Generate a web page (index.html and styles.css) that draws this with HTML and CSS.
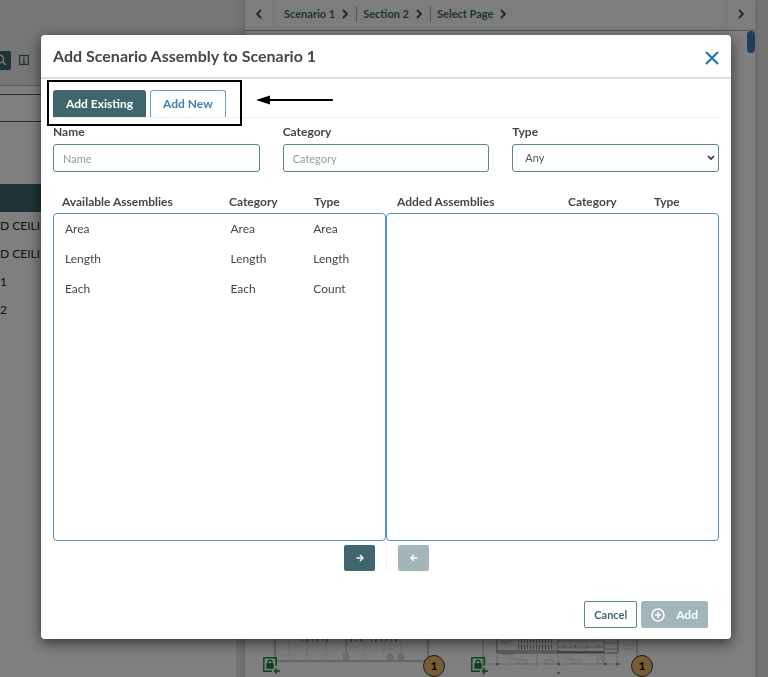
FILE: index.html
```html
<!DOCTYPE html>
<html lang="en">
<head>
  <meta charset="UTF-8" />
  <meta name="viewport" content="width=device-width, initial-scale=1.0" />
  <title>Add Scenario Assembly</title>
  <link rel="stylesheet" href="styles.css">
</head>
<body>
  <!-- Page behind the dialog -->
  <div class="page">
    <aside class="sidebar">
      <div class="sidebar-tools">
        <button class="search-btn" aria-label="Search">
          <svg width="12" height="12" viewBox="0 0 12 12" fill="none" stroke="#fff" stroke-width="1.3"><circle cx="5" cy="5" r="3.6"/><path d="M7.7 7.7L11 11"/></svg>
        </button>
        <svg width="10" height="10" viewBox="0 0 10 10" fill="none" stroke="#3f666d" stroke-width="1.2"><rect x=".6" y=".6" width="8.8" height="8.8"/><path d="M5 2v1.2M5 4.2V8M4 4.4h1M3.8 7.7h2.4"/></svg>
      </div>
      <input class="sidebar-filter" type="text" aria-label="Filter">
      <div class="sidebar-head"></div>
      <ul class="sidebar-list">
        <li>D CEILING</li>
        <li>D CEILING</li>
        <li>1</li>
        <li>2</li>
      </ul>
    </aside>

    <main class="viewer">
      <nav class="crumbs">
        <button class="crumb-nav" aria-label="Previous">
          <svg width="8" height="10" viewBox="0 0 8 10"><path d="M6 1L2 5l4 4"/></svg>
        </button>
        <a href="#">Scenario 1 <svg width="8" height="10" viewBox="0 0 8 10"><path d="M2 1l4 4-4 4"/></svg></a>
        <a href="#">Section 2 <svg width="8" height="10" viewBox="0 0 8 10"><path d="M2 1l4 4-4 4"/></svg></a>
        <a href="#">Select Page <svg width="8" height="10" viewBox="0 0 8 10"><path d="M2 1l4 4-4 4"/></svg></a>
        <button class="crumb-nav crumb-next" aria-label="Next">
          <svg width="8" height="10" viewBox="0 0 8 10"><path d="M2 1l4 4-4 4"/></svg>
        </button>
      </nav>
      <div class="sheets">
        <div class="scroll-thumb"></div>
        <div class="sheet">
          <svg class="plan" width="156" height="42" viewBox="0 0 156 42" fill="none" stroke="#999" stroke-width=".6">
            <path d="M1 0v26h153V0" stroke="#555" stroke-width="1"/>
            <path d="M28 5h30M72 5h20M97 5h30" stroke="#444" stroke-width="3" stroke-dasharray="1 3 2 4"/>
            <path d="M15 6v13M33 6v13M52 6v13M90 6v13M110 6v13M116 6v13M127 6v13" stroke="#bbb"/>
            <path d="M72 4v15" stroke="#666"/>
            <g stroke="#ccc"><circle cx="15" cy="22" r="2.5"/><circle cx="33" cy="22" r="2.5"/><circle cx="52" cy="22" r="2.5"/><circle cx="90" cy="22" r="2.5"/></g>
            <g stroke="#777" fill="#ccc"><circle cx="72" cy="22" r="3"/><circle cx="116" cy="22" r="3"/><circle cx="127" cy="22" r="3"/></g>
          </svg>
          <svg class="lock" width="17" height="17" viewBox="0 0 17 17" fill="none" stroke="#16853c" stroke-width="1.4"><path d="M9 14.2H.8V.8h12.4v8M5 7V5.2a2 2 0 0 1 4 0V7M17 14h-5M14 11.5L11.5 14l2.5 2.5"/><path d="M4 7h6v4H4z" fill="#16853c"/></svg>
          <span class="badge">1</span>
        </div>
        <div class="sheet">
          <svg class="plan" width="156" height="42" viewBox="0 0 156 42" fill="none" stroke="#999" stroke-width=".6">
            <path d="M1 0v42M155 0v26" stroke="#777" stroke-width="1"/>
            <path d="M15 0v18h121V0M15 16h61" stroke="#333" stroke-width="1"/>
            <path d="M36 5h36M36 12h36" stroke="#444" stroke-width="5" stroke-dasharray="1 2"/>
            <path d="M18 6h12M18 8h9M20 19h12" stroke="#333"/>
            <path d="M76 0v17h46V0M76 6h46M76 12h46M122 8h14M122 14h14" stroke="#333"/>
            <path d="M76 17h46" stroke="#222" stroke-width="1.5"/>
            <path d="M82 11h1M93 11h1M105 11h1M116 11h1" stroke="#111" stroke-width="1.5"/>
            <path d="M96 8h9v6h-9z" stroke="#d88"/>
            <path d="M4 4h10M4 8h9M142 4h9v6h-9zM143 14h8M4 18v11h135M25 22l4 2h8M81 22l4 2h7"/>
            <path d="M36 25h9v4h-9zM63 25h8v4h-8zM90 25h9v4h-9z"/>
            <path d="M15 20v12M55 20v12M76 20v12M122 20v12M135 20v12" stroke="#888"/>
            <path d="M14 29h3M75 29h3M122 29h3M134 29h3M75 38h3" stroke="#222" stroke-width="1.5"/>
            <circle cx="118" cy="26" r="3"/><path d="M115 21h6v6"/>
          </svg>
          <svg class="lock" width="17" height="17" viewBox="0 0 17 17" fill="none" stroke="#16853c" stroke-width="1.4"><path d="M9 14.2H.8V.8h12.4v8M5 7V5.2a2 2 0 0 1 4 0V7M17 14h-5M14 11.5L11.5 14l2.5 2.5"/><path d="M4 7h6v4H4z" fill="#16853c"/></svg>
          <span class="badge">1</span>
        </div>
      </div>
    </main>
    <div class="rail"></div>
  </div>

  <!-- Dialog -->
  <div class="overlay">
    <div class="modal" role="dialog" aria-labelledby="modalTitle">
      <div class="modal-header">
        <h1 id="modalTitle">Add Scenario Assembly to Scenario 1</h1>
        <button class="close-btn" aria-label="Close">
          <svg width="14" height="14" viewBox="0 0 14 14" fill="none" stroke="#3079a8" stroke-width="2.4"><path d="M1 1l12 12M13 1L1 13"/></svg>
        </button>
      </div>

      <div class="modal-body">
        <div class="tabs">
          <button class="tab active">Add Existing</button>
          <button class="tab">Add New</button>
          <div class="callout"></div>
          <svg class="callout-arrow" width="78" height="12" viewBox="0 0 78 12"><path d="M12 6h64" stroke="#000" stroke-width="2.2" stroke-linecap="round"/><path d="M0 6l14-4.5v9z"/></svg>
        </div>

        <div class="filters">
          <div class="field">
            <label for="name">Name</label>
            <input type="text" id="name" placeholder="Name">
          </div>
          <div class="field">
            <label for="category">Category</label>
            <input type="text" id="category" placeholder="Category">
          </div>
          <div class="field">
            <label for="type">Type</label>
            <div class="select-wrap">
              <select id="type">
                <option>Any</option>
              </select>
              <svg width="8" height="6" viewBox="0 0 8 6" fill="none" stroke="#333" stroke-width="1.7"><path d="M1 1l3 3 3-3"/></svg>
            </div>
          </div>
        </div>

        <div class="lists">
          <div class="list">
            <table class="available">
              <thead>
                <tr><th>Available Assemblies</th><th>Category</th><th>Type</th></tr>
              </thead>
              <tbody>
                <tr><td>Area</td><td>Area</td><td>Area</td></tr>
                <tr><td>Length</td><td>Length</td><td>Length</td></tr>
                <tr><td>Each</td><td>Each</td><td>Count</td></tr>
              </tbody>
            </table>
            <div class="move">
              <button class="move-btn" aria-label="Add to assemblies">
                <svg width="8" height="8" viewBox="0 0 8 8"><path d="M.5 4h6M4 1l3 3-3 3"/></svg>
              </button>
            </div>
          </div>
          <div class="list">
            <table class="added">
              <thead>
                <tr><th>Added Assemblies</th><th>Category</th><th>Type</th></tr>
              </thead>
              <tbody></tbody>
            </table>
            <div class="move">
              <button class="move-btn" aria-label="Remove from assemblies" disabled>
                <svg width="8" height="8" viewBox="0 0 8 8"><path d="M7.5 4h-6M4 1L1 4l3 3"/></svg>
              </button>
            </div>
          </div>
        </div>
      </div>

      <div class="modal-footer">
        <button class="btn">Cancel</button>
        <button class="btn btn-add" disabled>
          <svg width="14" height="14" viewBox="0 0 14 14" fill="none" stroke="#fff" stroke-width="1.5"><circle cx="7" cy="7" r="6"/><path d="M7 4v6M4 7h6"/></svg>
          Add
        </button>
      </div>
    </div>
  </div>
</body>
</html>
```
FILE: styles.css
```css
* {
  box-sizing: border-box;
}

body {
  margin: 0;
  height: 100vh;
  overflow: hidden;
  font-family: Lato, "Open Sans", sans-serif;
  font-size: 12px;
  line-height: 16px;
  color: #45464c;
}

button, input, select {
  font: inherit;
  margin: 0;
}

button {
  padding: 0;
  border: none;
  background: none;
  cursor: pointer;
}

svg {
  display: block;
  flex: none;
}

/* Page behind the dialog */
.page {
  display: flex;
  height: 100vh;
  background-color: #e6e6e6;
}

.sidebar {
  width: 236px;
  background-color: #fff;
}

.sidebar-tools {
  display: flex;
  align-items: center;
  gap: 8px;
  height: 86px;
  padding-top: 35px;
  background-color: #ededed;
  border-bottom: 1px solid #bbb;
}

.search-btn {
  display: flex;
  align-items: center;
  justify-content: flex-end;
  width: 11px;
  height: 19px;
  padding-right: 4px;
  border-radius: 0 2px 2px 0;
  background-color: #3f666d;
}

.sidebar-filter {
  display: block;
  width: 100%;
  height: 28px;
  margin-top: 8px;
  border: 1px solid #3f666d;
  border-left: none;
  background-color: #fff;
}

.sidebar-head {
  height: 28px;
  margin-top: 62px;
  background-color: #3f666d;
}

.sidebar-list {
  margin: 0;
  padding: 0;
  list-style: none;
  color: #222;
}

.sidebar-list li {
  height: 28px;
  line-height: 28px;
}

.viewer {
  flex: 1;
  display: flex;
  flex-direction: column;
  margin-left: 9px;
  background-color: #fff;
  box-shadow: 0 0 5px rgba(0, 0, 0, 0.2);
}

.crumbs {
  display: flex;
  align-items: center;
  height: 31px;
  padding-bottom: 2px;
  border-bottom: 1px solid #9db3b6;
  background-color: #fafafa;
}

.crumbs svg {
  fill: none;
  stroke: #24555e;
  stroke-width: 1.8;
}

.crumbs a {
  display: flex;
  align-items: center;
  gap: 6px;
  padding: 0 7px 0 6px;
  border-left: 1px solid #aaa;
  color: #3f666d;
  font-size: 11px;
  font-weight: bold;
  text-decoration: none;
}

.crumbs .crumb-nav + a {
  padding-left: 10px;
  border-left: none;
}

.crumb-nav {
  display: flex;
  align-items: center;
  justify-content: center;
  width: 29px;
  height: 28px;
  border-right: 1px solid #eee;
}

.crumb-next {
  margin-left: auto;
  border-right: none;
  border-left: 1px solid #eee;
}

.sheets {
  position: relative;
  flex: 1;
  display: flex;
  align-items: flex-end;
  gap: 52px;
  padding-left: 29px;
}

.scroll-thumb {
  position: absolute;
  top: 0;
  right: 0;
  width: 8px;
  height: 22px;
  border-radius: 4px;
  background-color: #3a7cb8;
}

.sheet {
  position: relative;
}

.plan {
  opacity: 0.6;
}

.lock {
  position: absolute;
  left: -11px;
  bottom: 3px;
}

.badge {
  position: absolute;
  right: -15px;
  bottom: 0;
  width: 22px;
  height: 22px;
  border: 1px solid #333;
  border-radius: 50%;
  background-color: #efb86e;
  color: #000;
  font-weight: bold;
  line-height: 20px;
  text-align: center;
}

.rail {
  width: 13px;
  border-left: 1px solid #ddd;
}

/* Dialog */
.overlay {
  position: fixed;
  inset: 0;
  padding: 35px 37px 0 41px;
  background-color: rgba(0, 0, 0, 0.5);
}

.modal {
  border-radius: 4px;
  background-color: #fff;
  box-shadow: 0 4px 14px rgba(0, 0, 0, 0.6);
}

.modal-header {
  display: flex;
  align-items: center;
  justify-content: space-between;
  height: 44px;
  padding: 0 12px;
  border-bottom: 2px solid #ddd;
}

.modal-header h1 {
  margin: 0;
  font-size: 16px;
  font-weight: bold;
}

.close-btn {
  padding-top: 4px;
}

.modal-body {
  padding: 11px 12px 0;
}

.tabs {
  position: relative;
  display: flex;
  gap: 4px;
  border-bottom: 1px solid #eee;
}

.tab {
  height: 27px;
  padding: 0 12px;
  border: 1px solid #6ba0c4;
  border-bottom: none;
  border-radius: 3px 3px 0 0;
  color: #3f82ad;
  font-weight: bold;
}

.tab.active {
  border-color: #3f666d;
  background-color: #3f666d;
  color: #fff;
}

/* Highlight drawn round the tabs */
.callout {
  position: absolute;
  top: -10px;
  left: -6px;
  width: 195px;
  height: 46px;
  border: 2px solid #000;
  pointer-events: none;
}

.callout-arrow {
  position: absolute;
  top: 4px;
  left: 203px;
}

.filters {
  display: grid;
  grid-template-columns: 1fr 1fr 1fr;
  gap: 23px;
  padding-top: 6px;
}

.field label {
  display: block;
  margin-bottom: 4px;
  font-weight: bold;
}

.field input, .field select {
  display: block;
  width: 100%;
  height: 28px;
  padding: 0 9px;
  border: 1px solid #5c858d;
  border-radius: 3px;
  background-color: #fff;
  color: #555;
  font-size: 11px;
}

.field input::placeholder {
  color: #999;
}

.select-wrap {
  position: relative;
}

.field select {
  padding: 0 12px;
  appearance: none;
}

.select-wrap svg {
  position: absolute;
  top: 11px;
  right: 4px;
  pointer-events: none;
}

.lists {
  display: grid;
  grid-template-columns: 1fr 1fr;
  padding-top: 22px;
}

.list + .list .move {
  justify-content: flex-start;
  border-left: 1px solid #eee;
}

table, thead, tbody {
  display: block;
}

tr {
  display: grid;
  grid-template-columns: 2fr 1fr 1fr;
}

th, td {
  padding: 0;
  text-align: left;
}

thead tr {
  height: 19px;
}

.available thead tr {
  grid-template-columns: 167fr 85fr 72fr;
  padding-left: 9px;
}

.added thead tr {
  grid-template-columns: 171fr 86fr 65fr;
  padding-left: 11px;
}

tbody {
  height: 328px;
  border: 1px solid #5193b9;
  border-radius: 4px;
}

td {
  padding-left: 11px;
  line-height: 30px;
}

.move {
  display: flex;
  justify-content: flex-end;
  padding: 4px 11px 0;
}

.move-btn {
  display: flex;
  align-items: center;
  justify-content: center;
  width: 31px;
  height: 26px;
  border-radius: 2px;
  background-color: #3f666d;
}

.move-btn svg {
  fill: none;
  stroke: #fff;
  stroke-width: 1.4;
}

.move-btn:disabled, .btn-add:disabled {
  background-color: #a2b5b9;
  cursor: default;
}

.modal-footer {
  display: flex;
  justify-content: flex-end;
  gap: 4px;
  padding: 30px 23px 11px;
}

.btn {
  height: 27px;
  padding: 0 9px;
  border: 1px solid #5c858d;
  border-radius: 2px;
  color: #3f666d;
  font-size: 11px;
  font-weight: bold;
}

.btn-add {
  display: flex;
  align-items: center;
  gap: 11px;
  border-color: #a2b5b9;
  color: #fff;
  font-size: 12px;
}
```
